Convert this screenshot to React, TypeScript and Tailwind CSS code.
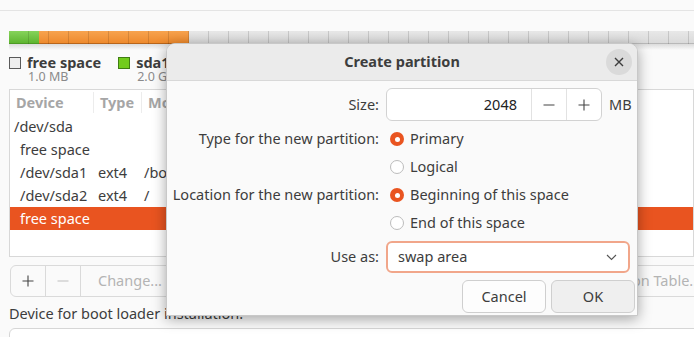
import React from 'react';

const font = { fontFamily: '"Noto Sans", "DejaVu Sans", sans-serif' };

function Radio({ checked, label }: { checked?: boolean; label: string }) {
  return (
    <div className="flex h-[28px] items-center gap-[6px] pl-[4px]">
      {checked ? (
        <span className="flex h-[14px] w-[14px] items-center justify-center rounded-full bg-[#e95420]">
          <span className="h-[5px] w-[5px] rounded-full bg-white" />
        </span>
      ) : (
        <span className="h-[14px] w-[14px] rounded-full border border-[#bcbcbc] bg-white" />
      )}
      <span className="text-[14.5px] text-[#3d3d3d]">{label}</span>
    </div>
  );
}

function FormRow({ label, children }: { label?: string; children: React.ReactNode }) {
  return (
    <div className="flex items-center">
      <div className="w-[212px] shrink-0 whitespace-nowrap text-right text-[14.5px] text-[#3d3d3d]">{label}</div>
      <div className="ml-[7px] flex flex-1 items-center">{children}</div>
    </div>
  );
}

function CreatePartitionDialog() {
  return (
    <div className="absolute left-[166px] top-[43px] flex h-[273px] w-[472px] flex-col overflow-hidden rounded-t-[9px] border border-[#c8c8c8] bg-[#fafafa] shadow-[0_3px_14px_rgba(0,0,0,0.35)]">
      {/* header */}
      <div className="relative flex h-[37px] shrink-0 items-center justify-center border-b border-[#d8d8d8] bg-[#ebebeb]">
        <span className="text-[14.5px] font-bold text-[#3d3d3d]">Create partition</span>
        <button
          type="button"
          className="absolute right-[5px] top-[5px] flex h-[26px] w-[26px] items-center justify-center rounded-full bg-[#dadada]"
        >
          <svg width="10" height="10" viewBox="0 0 10 10" fill="none" stroke="#3d3d3d" strokeWidth="1.4">
            <path d="M1 1 L9 9 M9 1 L1 9" />
          </svg>
        </button>
      </div>

      <div className="flex flex-col pt-[7px]">
        <FormRow label="Size:">
          <div className="flex h-[33px] w-[216px] items-stretch rounded-[6px] border border-[#d2d2d2] bg-white">
            <div className="flex flex-1 items-center justify-end pr-[14px] text-[14.5px] text-[#222]">2048</div>
            <div className="flex w-[35px] items-center justify-center border-l border-[#e2e2e2]">
              <svg width="12" height="12" viewBox="0 0 12 12" stroke="#444" strokeWidth="1.1">
                <path d="M0.5 6 H11.5" />
              </svg>
            </div>
            <div className="flex w-[35px] items-center justify-center border-l border-[#e2e2e2]">
              <svg width="12" height="12" viewBox="0 0 12 12" stroke="#444" strokeWidth="1.1">
                <path d="M0.5 6 H11.5 M6 0.5 V11.5" />
              </svg>
            </div>
          </div>
          <span className="ml-[7px] text-[14.5px] text-[#3d3d3d]">MB</span>
        </FormRow>

        <div className="mt-[4px]">
          <FormRow label="Type for the new partition:">
            <Radio checked label="Primary" />
          </FormRow>
          <FormRow>
            <Radio label="Logical" />
          </FormRow>
          <FormRow label="Location for the new partition:">
            <Radio checked label="Beginning of this space" />
          </FormRow>
          <FormRow>
            <Radio label="End of this space" />
          </FormRow>
        </div>

        <div className="mt-[4px]">
          <FormRow label="Use as:">
            <div className="flex h-[32px] w-[244px] items-center justify-between rounded-[6px] border-2 border-[#f1a68a] bg-white pl-[10px] pr-[11px]">
              <span className="text-[14.5px] text-[#3d3d3d]">swap area</span>
              <svg width="11" height="7" viewBox="0 0 11 7" fill="none" stroke="#555" strokeWidth="1.1">
                <path d="M1 1 L5.5 5.5 L10 1" />
              </svg>
            </div>
          </FormRow>
        </div>

        <div className="mt-[7px] flex justify-end gap-[5px] pr-[2px]">
          <button
            type="button"
            className="h-[33px] w-[84px] rounded-[6px] border border-[#cfcfcf] bg-[#fdfdfd] text-[14.5px] text-[#3d3d3d]"
          >
            Cancel
          </button>
          <button
            type="button"
            className="h-[33px] w-[84px] rounded-[6px] border border-[#cfcfcf] bg-[#efefef] text-[14.5px] text-[#3d3d3d]"
          >
            OK
          </button>
        </div>
      </div>
    </div>
  );
}

const rows = [
  { device: '/dev/sda', type: '', mount: '', indent: false },
  { device: 'free space', type: '', mount: '', indent: true },
  { device: '/dev/sda1', type: 'ext4', mount: '/boot', indent: true },
  { device: '/dev/sda2', type: 'ext4', mount: '/', indent: true },
  { device: 'free space', type: '', mount: '', indent: true, selected: true },
];

export default function App() {
  return (
    <div style={font} className="relative h-[337px] w-[694px] overflow-hidden bg-[#fafafa]">
      <div className="mt-[10px] border-t border-[#e4e4e4] pt-[20px]">
        {/* partition bar */}
        <div className="relative ml-[9px] flex h-[13px]">
          <div className="w-[30px] border-b border-[#4c9a24] bg-gradient-to-b from-[#86d35a] to-[#5eb52f]" />
          <div className="w-[150px] border-b border-[#b8651b] bg-gradient-to-b from-[#f7a34e] to-[#ee8a2c]" />
          <div className="flex-1 border-b border-[#b8b8b8] bg-gradient-to-b from-[#e8e8e8] to-[#dadada]" />
          <div className="pointer-events-none absolute inset-0 bg-[repeating-linear-gradient(90deg,transparent_0_19px,rgba(0,0,0,0.13)_19px_20px)]" />
        </div>
        <div className="ml-[9px] h-[6px] bg-gradient-to-b from-[rgba(0,0,0,0.12)] to-transparent" />

        {/* legend */}
        <div className="ml-[9px] mt-[4px] flex gap-[17px]">
          <div className="flex gap-[6px]">
            <span className="mt-[3px] h-[12px] w-[12px] border border-[#5a5a5a] bg-[#eeeeee]" />
            <div className="flex flex-col">
              <span className="text-[14.5px] font-bold leading-[16px] text-[#3d3d3d]">free space</span>
              <span className="pl-[1px] text-[12.5px] leading-[14px] text-[#8a8a8a]">1.0 MB</span>
            </div>
          </div>
          <div className="flex gap-[6px]">
            <span className="mt-[3px] h-[12px] w-[12px] border border-[#3f7d12] bg-[#72cc1c]" />
            <div className="flex flex-col">
              <span className="text-[14.5px] font-bold leading-[16px] text-[#3d3d3d]">sda1 (ext4)</span>
              <span className="pl-[1px] text-[12.5px] leading-[14px] text-[#8a8a8a]">2.0 GB</span>
            </div>
          </div>
        </div>

        {/* partition table */}
        <div className="ml-[9px] mt-[5px] h-[168px] border border-[#d8d8d8] bg-white">
          <div className="flex h-[25px] items-center text-[14.5px] font-bold text-[#a6a6a6]">
            <div className="w-[83px] pl-[6px]">Device</div>
            <div className="w-[48px] border-l border-[#ececec] pl-[6px]">Type</div>
            <div className="flex-1 whitespace-nowrap border-l border-[#ececec] pl-[6px]">Mount point</div>
          </div>
          {rows.map((r, i) => (
            <div
              key={i}
              className={`flex h-[23px] items-center text-[14.5px] ${r.selected ? 'bg-[#e95420] text-white' : 'text-[#3d3d3d]'}`}
            >
              <div className={`w-[84px] whitespace-nowrap ${r.indent ? 'pl-[10px]' : 'pl-[4px]'}`}>{r.device}</div>
              <div className="w-[47px] pl-[4px]">{r.type}</div>
              <div className="flex-1 pl-[3px]">{r.mount}</div>
            </div>
          ))}
        </div>

        {/* toolbar */}
        <div className="ml-[10px] mt-[8px] flex w-[704px] items-center justify-between">
          <div className="flex h-[32px] rounded-[6px] border border-[#dadada] bg-[#fafafa] text-[14.5px]">
            <div className="flex w-[34px] items-center justify-center text-[#3d3d3d]">
              <svg width="12" height="12" viewBox="0 0 12 12" stroke="#444" strokeWidth="1.1">
                <path d="M0.5 6 H11.5 M6 0.5 V11.5" />
              </svg>
            </div>
            <div className="flex w-[35px] items-center justify-center border-l border-[#dadada]">
              <svg width="12" height="12" viewBox="0 0 12 12" stroke="#c4c4c4" strokeWidth="1.1">
                <path d="M0.5 6 H11.5" />
              </svg>
            </div>
            <div className="flex items-center border-l border-[#dadada] px-[17px] text-[#b4b4b4]">Change...</div>
          </div>
          <div className="flex h-[32px] items-center whitespace-nowrap rounded-[6px] border border-[#dadada] bg-[#fafafa] px-[12px] text-[14.5px] text-[#b4b4b4]">
            New Partition Table...
          </div>
        </div>

        <div className="ml-[9px] mt-[6px] text-[14.5px] text-[#3d3d3d]">Device for boot loader installation:</div>
        <div className="ml-[9px] mt-[3px] h-[32px] w-[720px] rounded-[6px] border border-[#d6d6d6] bg-white" />
      </div>

      <CreatePartitionDialog />
    </div>
  );
}
